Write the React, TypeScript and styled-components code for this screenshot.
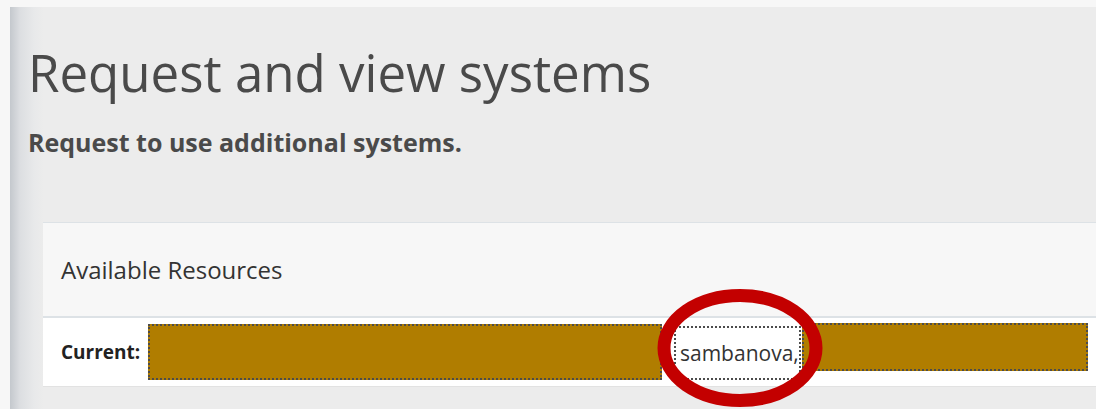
import styled, { createGlobalStyle } from 'styled-components'

const GlobalStyle = createGlobalStyle`
  html, body {
    margin: 0;
    padding: 0;
    background-color: #f7f7f7;
    font-family: "Open Sans", Lato, sans-serif;
  }
`

const Frame = styled.div`
  height: 409px;
  padding: 7px 0 0 10px;
  box-sizing: border-box;
  overflow: hidden;
`

const Main = styled.main`
  height: 100%;
  padding: 0 0 0 18px;
  background: linear-gradient(90deg, #c4c8cd 0px, #dcdee1 10px, #e8e9ea 24px, #ececec 34px);
  overflow: hidden;
`

const Title = styled.h1`
  margin: 0;
  padding-top: 35px;
  font-size: 51px;
  font-weight: 400;
  line-height: 60px;
  color: #4a4a4a;
`

const Subtitle = styled.p`
  margin: 25px 0 0;
  font-size: 25px;
  font-weight: 700;
  line-height: 30px;
  color: #4a4a4a;
`

const Card = styled.section`
  width: 1100px;
  margin: 65px 0 0 15px;
  border-top: 1px solid #dde2e6;
`

const CardHeader = styled.header`
  display: flex;
  align-items: center;
  height: 93px;
  padding-left: 18px;
  background-color: #f7f7f7;
  border-bottom: 2px solid #dde2e6;
  font-size: 24px;
  color: #333;
`

const CardBody = styled.div`
  position: relative;
  display: flex;
  align-items: flex-start;
  height: 68px;
  padding-left: 18px;
  background-color: #fff;
  border-bottom: 1px solid #e2e2e2;
`

const Label = styled.span`
  align-self: center;
  width: 87px;
  font-size: 19px;
  font-weight: 700;
  color: #222;
`

const Chip = styled.span<{ $top: number; $w: number; $h: number; $redacted?: boolean }>`
  display: flex;
  align-items: center;
  box-sizing: border-box;
  margin-top: ${p => p.$top}px;
  width: ${p => p.$w}px;
  height: ${p => p.$h}px;
  padding-left: 4px;
  background-color: ${p => (p.$redacted ? '#b07d00' : '#fff')};
  border: 2px dotted #4c4c4c;
  font-size: 21px;
  color: #333;
`

const Gap = styled.span<{ $w: number }>`
  width: ${p => p.$w}px;
`

const Ring = styled.svg`
  position: absolute;
  left: 614px;
  top: -29px;
  pointer-events: none;
`

export default function App() {
  return (
    <>
      <GlobalStyle />
      <Frame>
        <Main>
          <Title>Request and view systems</Title>
          <Subtitle>Request to use additional systems.</Subtitle>
          <Card>
            <CardHeader>Available Resources</CardHeader>
            <CardBody>
              <Label>Current:</Label>
              <Chip $redacted $top={6} $w={514} $h={56} />
              <Gap $w={12} />
              <Chip $top={8} $w={127} $h={54}>sambanova,</Chip>
              <Gap $w={1} />
              <Chip $redacted $top={5} $w={286} $h={48} />
              <Ring width="166" height="118" viewBox="0 0 166 118">
                <ellipse cx="83" cy="59" rx="76" ry="52.5" fill="none" stroke="#c30000" strokeWidth="13" />
              </Ring>
            </CardBody>
          </Card>
        </Main>
      </Frame>
    </>
  )
}
